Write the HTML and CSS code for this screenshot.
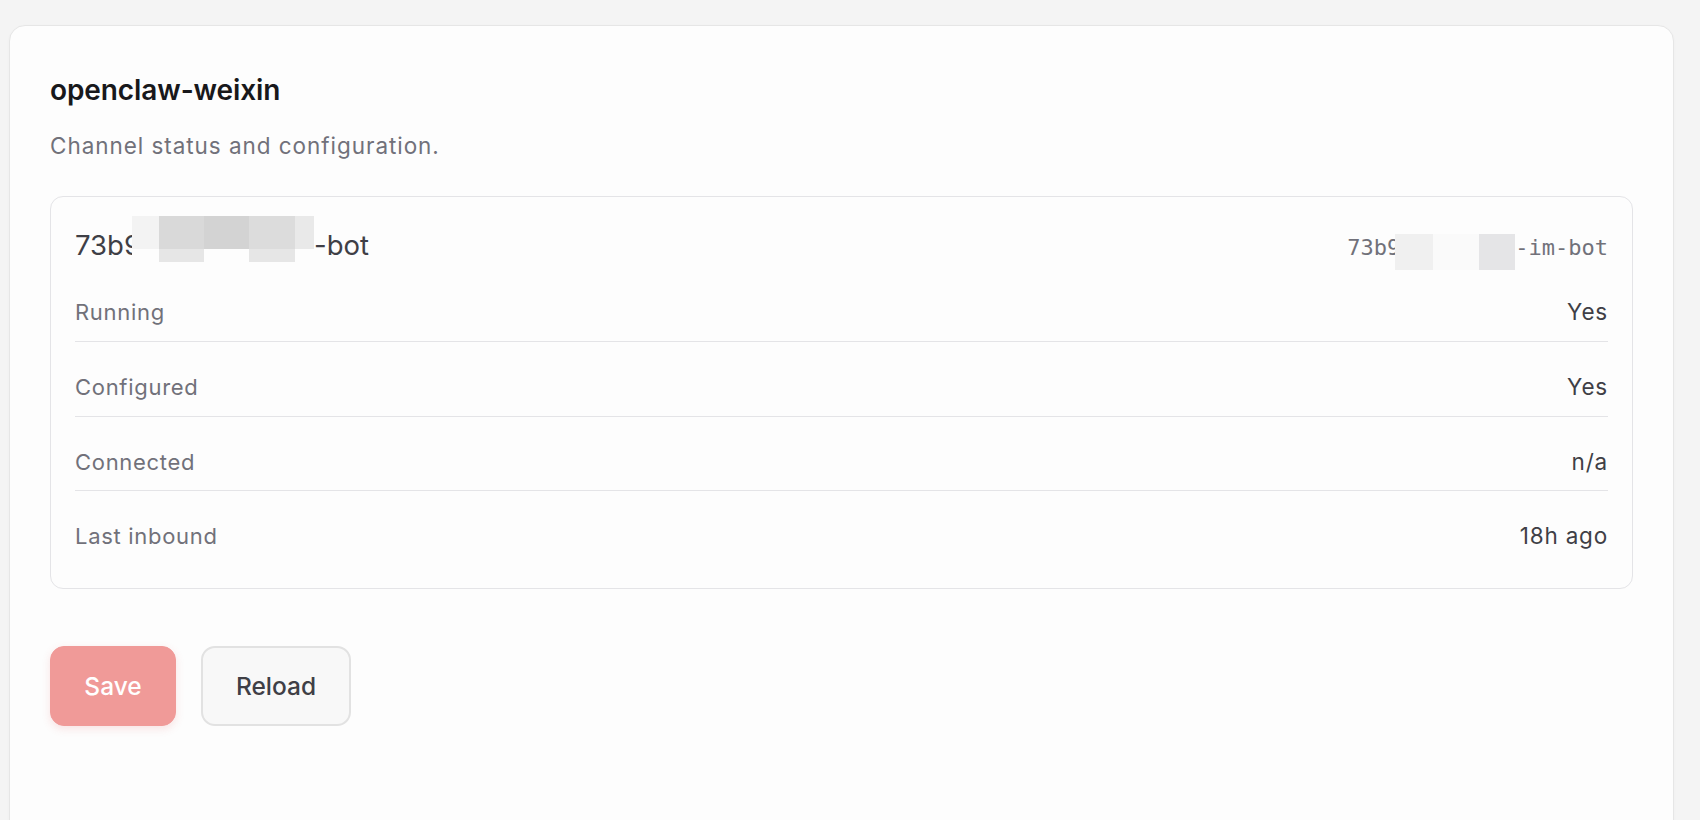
FILE: index.html
```html
<!DOCTYPE html>
<html lang="en">
<head>
<meta charset="utf-8">
<title>openclaw-weixin</title>
<link rel="stylesheet" href="styles.css">
</head>
<body>
<main class="card">
  <h1 class="card-title">openclaw-weixin</h1>
  <p class="card-sub">Channel status and configuration.</p>

  <section class="account">
    <div class="account-head">
      <div class="account-name">73b9<span class="redact redact-name"><span class="mosaic"><i class="c c1"></i><i class="c c2"></i><i class="c c3"></i><i class="c c4"></i><i class="c c5"></i><i class="c c6"></i><i class="c c7"></i><i class="c c8"></i><i class="c c9"></i><i class="c c10"></i></span></span>-bot</div>
      <div class="account-id">73b9<span class="redact redact-id"><span class="mosaic"><i class="m m1"></i><i class="m m2"></i><i class="m m3"></i></span></span>-im-bot</div>
    </div>
    <div class="rows">
      <div class="row"><span class="label">Running</span><span class="value">Yes</span></div>
      <div class="row"><span class="label">Configured</span><span class="value">Yes</span></div>
      <div class="row"><span class="label">Connected</span><span class="value">n/a</span></div>
      <div class="row"><span class="label">Last inbound</span><span class="value">18h ago</span></div>
    </div>
  </section>

  <div class="actions">
    <button class="btn btn-primary" disabled>Save</button>
    <button class="btn btn-secondary">Reload</button>
  </div>
</main>
</body>
</html>
```
FILE: styles.css
```css
* { box-sizing: border-box; }

html, body {
  margin: 0;
  background: #f4f4f4;
}

body {
  padding: 25px 26px 0 9px;
  font-family: Inter, "Noto Sans", "Liberation Sans", sans-serif;
  overflow: hidden;
  height: 820px;
}

.card {
  background: #fdfdfd;
  border: 1px solid #e6e6e6;
  border-radius: 16px;
  padding: 47px 40px 40px 40px;
  min-height: 900px;
  box-shadow: 0 1px 3px rgba(0, 0, 0, 0.03);
}

.card-title {
  margin: 0;
  font-size: 28px;
  line-height: 35px;
  font-weight: 600;
  color: #18181b;
  letter-spacing: -0.1px;
}

.card-sub {
  margin: 23px 0 0;
  font-size: 22.5px;
  line-height: 29px;
  letter-spacing: 0.95px;
  color: #71717a;
}

.account {
  margin-top: 36px;
  border: 1px solid #e4e4e7;
  border-radius: 13px;
  padding: 24px 24px 23px 24px;
}

.account-head {
  display: flex;
  justify-content: space-between;
  align-items: baseline;
  height: 46px;
  padding-top: 2px;
}

.account-name {
  font-size: 27.5px;
  line-height: 44px;
  color: #3f3f46;
  white-space: nowrap;
}

.account-id {
  font-family: "DejaVu Sans Mono", "Liberation Mono", monospace;
  font-size: 22px;
  line-height: 44px;
  color: #71717a;
  white-space: nowrap;
}

/* pixelated redaction that lies over part of the text */
.redact {
  display: inline-block;
  position: relative;
  height: 0;
  vertical-align: baseline;
}

.mosaic {
  position: absolute;
  left: 0;
  display: grid;
}

.redact-name {
  margin-left: -9px;
  width: 182px;
}

.redact-name .mosaic {
  bottom: -7px;
  width: 182px;
  height: 46px;
  grid-template-columns: 26.6px 45.7px 45px 46px 18.7px;
  grid-template-rows: 33px 13px;
}

.redact-id {
  margin-left: -5px;
  width: 120px;
}

.redact-id .mosaic {
  bottom: -15px;
  width: 120px;
  height: 36px;
  grid-template-columns: 38px 46px 36px;
  grid-template-rows: 36px;
}

.c, .m { display: block; }
.c1 { background: #f3f3f3; }
.c2 { background: #d9d9d9; }
.c3 { background: #d3d3d3; }
.c4 { background: #dcdcdc; }
.c5 { background: #e9e9e9; }
.c6 { background: #fdfdfd; }
.c7 { background: #e6e6e6; }
.c8 { background: #fdfdfd; }
.c9 { background: #e6e6e6; }
.c10 { background: #fdfdfd; }

.m1 { background: #f0f0f0; }
.m2 { background: #fafafa; }
.m3 { background: #e5e5e7; }

.row {
  display: flex;
  justify-content: space-between;
  align-items: baseline;
  padding: 29px 0 12.8px;
  border-bottom: 1px solid #e4e4e7;
}

.row:last-child {
  border-bottom: none;
}

.label {
  font-size: 22px;
  line-height: 31px;
  letter-spacing: 0.7px;
  color: #71717a;
}

.value {
  font-size: 22.5px;
  line-height: 31px;
  letter-spacing: 0.8px;
  color: #3f3f46;
}

.actions {
  display: flex;
  gap: 25px;
  margin-top: 57px;
}

.btn {
  height: 80px;
  padding: 0;
  border-radius: 14px;
  font-family: Inter, "Noto Sans", "Liberation Sans", sans-serif;
  font-size: 24.5px;
  font-weight: 500;
  cursor: pointer;
}

.btn-primary {
  width: 126px;
  background: #f09a98;
  color: #ffffff;
  border: 1px solid #f09a98;
  box-shadow: 0 3px 8px rgba(220, 80, 80, 0.15);
}

.btn-secondary {
  width: 150px;
  background: #f8f8f8;
  color: #3f3f46;
  border: 2px solid #e2e2e2;
}
```
